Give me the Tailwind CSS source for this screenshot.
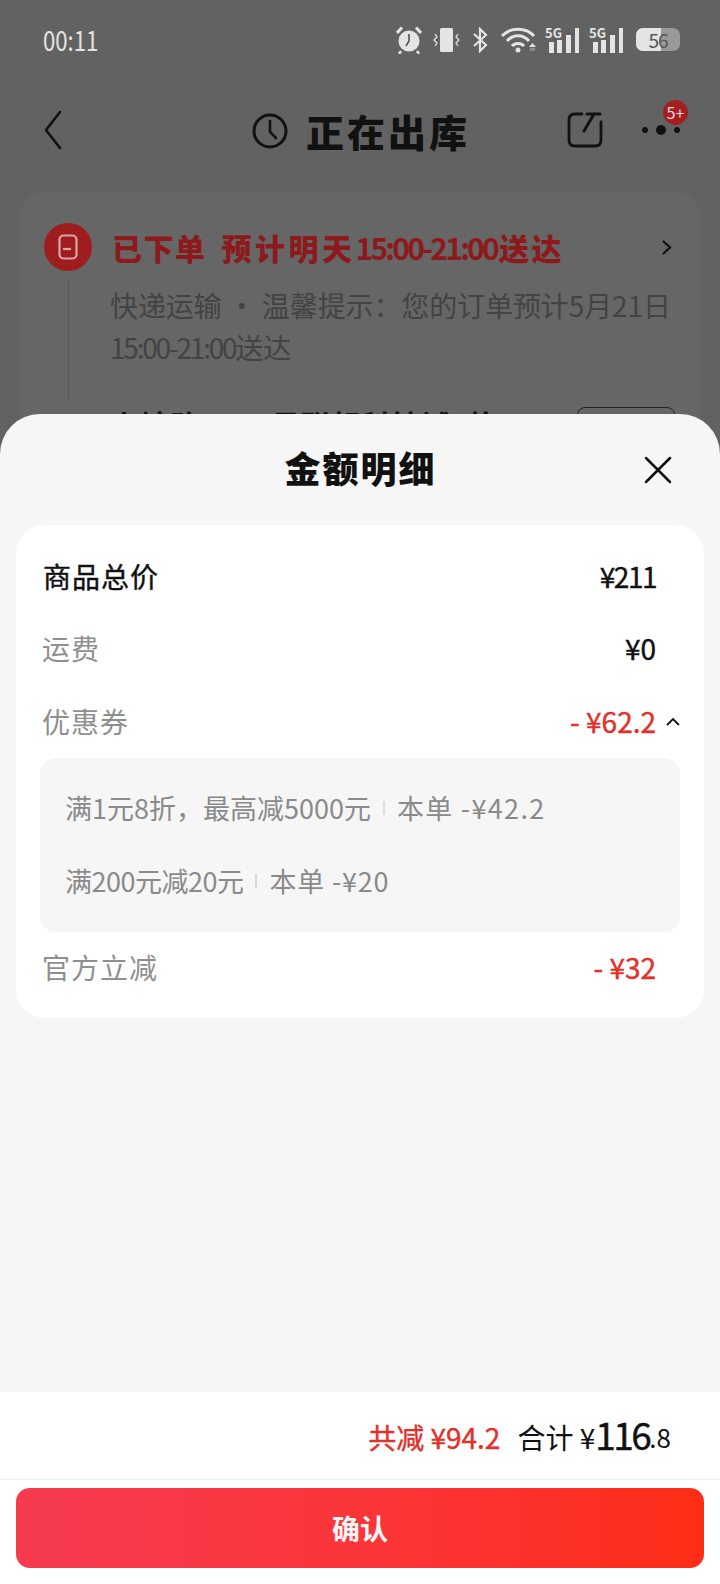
<!DOCTYPE html>
<html lang="zh">
<head>
  <meta charset="utf-8"/>
  <meta name="viewport" content="width=device-width, initial-scale=1.0"/>
  <title>金额明细</title>
  <script src="https://cdn.jsdelivr.net/npm/@tailwindcss/browser@4"></script>
</head>
<body class="bg-[#626262] font-['Noto_Sans_CJK_SC',sans-serif]">
  <div class="relative w-[720px] h-[1584px] overflow-hidden">

    <!-- Status bar -->
    <div class="h-[80px] pl-[43px] pr-[40px] flex items-center justify-between text-[#e4e4e4]">
      <span class="text-[27px] leading-none origin-left scale-x-[0.82] mt-[-2px]">00:11</span>
      <div class="flex items-center h-[28px] mt-[-1px]">
        <svg width="26" height="28" viewBox="0 0 26 28" class="mr-[10px]">
          <circle cx="13" cy="15" r="10.500" fill="#e4e4e4"/>
          <path d="M1 7 L6 1.500 M25 7 L20 1.500" stroke="#e4e4e4" stroke-width="3"/>
          <path d="M5 25 L3 28 M21 25 L23 28" stroke="#e4e4e4" stroke-width="2.500"/>
          <path d="M13 8 V15 L10 20" stroke="#555" stroke-width="1.600" fill="none"/>
        </svg>
        <svg width="30" height="26" viewBox="0 0 30 26" class="mr-[10px]">
          <rect x="8" y="1" width="13" height="24" rx="1.500" fill="#e4e4e4"/>
          <path d="M3 7 L5 10 L2 13 L5 16 L3 19 M26 7 L24 10 L27 13 L24 16 L26 19" stroke="#e4e4e4" stroke-width="1.300" fill="none"/>
        </svg>
        <svg width="16" height="26" viewBox="0 0 16 26" class="mr-[13px]">
          <path d="M2 7 L14 18 L8 24 V2 L14 8 L2 19" stroke="#e4e4e4" stroke-width="2.200" fill="none"/>
        </svg>
        <svg width="36" height="26" viewBox="0 0 36 26" class="mr-[8px]">
          <path d="M1 9 C9 0 25 0 33 9 M6 14 C12 7 22 7 28 14 M11 19 C14 15.500 20 15.500 23 19" stroke="#e4e4e4" stroke-width="3" fill="none"/>
          <circle cx="17" cy="23" r="2.500" fill="#e4e4e4"/>
          <path d="M28 20 L31.500 16 L35 20 Z" fill="#e4e4e4"/>
          <rect x="29" y="21" width="5" height="3" fill="#8a8a8a"/>
        </svg>
        <div class="relative w-[36px] h-[26px] mr-[8px]">
          <span class="absolute left-0 top-[-1px] text-[13px] leading-[14px] font-bold">5G</span>
          <svg width="36" height="26" viewBox="0 0 36 26" class="absolute left-0 top-0">
            <rect x="4" y="15" width="5" height="11" fill="#e4e4e4"/>
            <rect x="12" y="13" width="5" height="13" fill="#e4e4e4"/>
            <rect x="21" y="8" width="5" height="18" fill="#e4e4e4"/>
            <rect x="30" y="1" width="4" height="25" fill="#e4e4e4"/>
          </svg>
        </div>
        <div class="relative w-[36px] h-[26px] mr-[11px]">
          <span class="absolute left-0 top-[-1px] text-[13px] leading-[14px] font-bold">5G</span>
          <svg width="36" height="26" viewBox="0 0 36 26" class="absolute left-0 top-0">
            <rect x="4" y="15" width="5" height="11" fill="#e4e4e4"/>
            <rect x="12" y="13" width="5" height="13" fill="#e4e4e4"/>
            <rect x="21" y="8" width="5" height="18" fill="#e4e4e4"/>
            <rect x="30" y="1" width="4" height="25" fill="#e4e4e4"/>
          </svg>
        </div>
        <div class="relative w-[44px] h-[23px] rounded-[7px] bg-[#999]">
          <div class="w-[25px] h-full rounded-l-[7px] bg-[#e4e4e4]"></div>
          <span class="absolute inset-0 flex items-center justify-center text-[19px] leading-none tracking-[-1px] text-[#555]">56</span>
        </div>
      </div>
    </div>

    <!-- Order page under the sheet -->
    <div class="relative h-[100px] pl-[44px] pr-[40px] flex items-center justify-between">
      <svg width="18" height="40" viewBox="0 0 18 40">
        <path d="M16 2 L2 20 L16 38" stroke="#111" stroke-width="2.600" fill="none" stroke-linecap="round" stroke-linejoin="round"/>
      </svg>
      <div class="flex items-center absolute left-[252px] top-[26px] h-[50px]">
        <svg width="36" height="36" viewBox="0 0 36 36" class="mr-[18px]">
          <circle cx="18" cy="18" r="16" stroke="#111" stroke-width="3" fill="none"/>
          <path d="M18 8 V19 L24 25" stroke="#111" stroke-width="2.600" fill="none" stroke-linecap="round"/>
        </svg>
        <span class="text-[38px] leading-none font-black tracking-[3px] text-[#111]">正在出库</span>
      </div>
      <div class="flex items-center">
        <svg width="36" height="36" viewBox="0 0 36 36" class="mr-[39px]">
          <path d="M15 2 H8 Q2 2 2 8 V28 Q2 34 8 34 H28 Q34 34 34 28 V10" stroke="#111" stroke-width="2.800" fill="none" stroke-linecap="round"/>
          <path d="M20 2 H33 L27 2 L17 19" stroke="#111" stroke-width="3" fill="none" stroke-linecap="round" stroke-linejoin="round"/>
        </svg>
        <svg width="38" height="12" viewBox="0 0 38 12">
          <circle cx="3" cy="6" r="3" fill="#111"/>
          <circle cx="19" cy="6" r="5" fill="#111"/>
          <circle cx="35" cy="6" r="3" fill="#111"/>
        </svg>
      </div>
      <span class="absolute left-[663px] top-[20px] w-[25px] h-[25px] rounded-full bg-[#a31f22] text-[#f0d8d8] text-[16px] leading-[25px] text-center">5+</span>
    </div>

    <div class="mt-[12px] mx-[20px] rounded-[24px] bg-[#666666] pt-[31px] pl-[24px] pr-[25px] h-[400px]">
      <div class="flex items-center">
        <div class="w-[48px] h-[48px] rounded-full bg-[#a01d1f] flex items-center justify-center mr-[20px] shrink-0">
          <svg width="20" height="26" viewBox="0 0 20 26">
            <rect x="1.500" y="1.500" width="17" height="23" rx="4" stroke="#d8a8a8" stroke-width="2.200" fill="none"/>
            <path d="M5 15 H13" stroke="#d8a8a8" stroke-width="2.200"/>
          </svg>
        </div>
        <div class="flex items-center text-[30px] leading-none font-black text-[#8c1a1c] whitespace-nowrap">
          <span class="tracking-[1.500px] mr-[15px]">已下单</span>
          <span class="tracking-[3.500px]">预计明天</span>
          <span class="font-bold tracking-[-2.800px]">15:00-21:00</span>
          <span class="tracking-[2.500px] ml-[2px]">送达</span>
        </div>
        <svg width="11" height="17" viewBox="0 0 11 17" class="ml-auto mr-[3px]">
          <path d="M2 2 L9 8.500 L2 15" stroke="#111" stroke-width="2.200" fill="none"/>
        </svg>
      </div>
      <div class="flex">
        <div class="w-[1px] h-[120px] bg-[#585858] ml-[24px] mt-[8px] mr-[41px] shrink-0"></div>
        <div class="flex-1">
          <p class="mt-[13px] text-[28px] leading-[42px] tracking-[-0.100px] text-[#434343] whitespace-nowrap">快递运输 · 温馨提示：您的订单预计5月21日<br/><span class="tracking-[-2.200px]">15:00-21:00</span>送达</p>
          <div class="flex items-start justify-between mt-[36px]">
            <span class="text-[30px] leading-[40px] font-bold text-[#111] whitespace-nowrap">上塘路1000号联想科技城1栋</span>
            <span class="mt-[3px] w-[98px] h-[50px] rounded-[8px] border border-[#222]"></span>
          </div>
        </div>
      </div>
    </div>

    <!-- Bottom sheet -->
    <div class="absolute left-0 right-0 top-[414px] bottom-0 bg-[#f6f6f6] rounded-t-[40px] flex flex-col">
      <div class="relative h-[111px] flex items-center justify-center">
        <span class="text-[36px] leading-none font-black tracking-[2px] text-[#111] mt-[-5px] ml-[1px]">金额明细</span>
        <svg width="28" height="28" viewBox="0 0 28 28" class="absolute left-[644px] top-[42px]">
          <path d="M2 2 L26 26 M26 2 L2 26" stroke="#111" stroke-width="2.500" stroke-linecap="round"/>
        </svg>
      </div>

      <div class="mx-[16px] h-[493px] bg-white rounded-[28px] pt-[33px] px-[24px] text-[28px] leading-[36px]">
        <div class="flex justify-between pl-[3px] pr-[24px] text-[#111]">
          <span class="tracking-[1px] [-webkit-text-stroke:0.4px_#111]">商品总价</span>
          <span class="tracking-[-1.500px] [-webkit-text-stroke:0.4px_#111]">¥211</span>
        </div>
        <div class="flex justify-between mt-[36px] pl-[2px] pr-[24px]">
          <span class="tracking-[1px] text-[#8f8f8f]">运费</span>
          <span class="text-[#111] [-webkit-text-stroke:0.4px_#111]">¥0</span>
        </div>
        <div class="flex items-center mt-[37px] pl-[2px]">
          <span class="tracking-[1px] text-[#8f8f8f]">优惠券</span>
          <span class="ml-auto text-[#e3302a] [-webkit-text-stroke:0.4px_#e3302a]">- ¥62.2</span>
          <svg width="14" height="9" viewBox="0 0 14 9" class="ml-[10px]">
            <path d="M1 8 L7 2 L13 8" stroke="#111" stroke-width="1.800" fill="none"/>
          </svg>
        </div>
        <div class="mt-[19px] h-[174px] rounded-[16px] bg-[#f6f6f6] pt-[32px] pl-[25px] text-[27px] leading-[36px] text-[#8a8a8a]">
          <div class="flex items-center">
            <span>满1元8折，最高减5000元</span>
            <span class="w-[2px] h-[14px] bg-[#d8d8d8] mx-[12px]"></span>
            <span class="tracking-[1.300px]">本单 -¥42.2</span>
          </div>
          <div class="flex items-center mt-[37px]">
            <span class="tracking-[-0.500px]">满200元减20元</span>
            <span class="w-[2px] h-[14px] bg-[#d8d8d8] mx-[12px]"></span>
            <span class="tracking-[0.800px]">本单 -¥20</span>
          </div>
        </div>
        <div class="flex justify-between mt-[17px] pl-[2px] pr-[24px]">
          <span class="tracking-[1px] text-[#8f8f8f]">官方立减</span>
          <span class="text-[#e3302a] [-webkit-text-stroke:0.4px_#e3302a]">- ¥32</span>
        </div>
      </div>

      <!-- Totals and confirm button -->
      <div class="mt-auto bg-white h-[192px] flex flex-col">
        <div class="h-[88px] border-b border-[#f0f0f0] flex items-center justify-end pr-[49px] pt-[2px]">
          <span class="text-[28px] leading-none text-[#e3302a] mr-[17px] [-webkit-text-stroke:0.4px_#e3302a]">共减 ¥94.2</span>
          <span class="text-[28px] leading-none text-[#111]">合计 ¥</span>
          <span class="text-[37px] leading-none tracking-[-2.500px] text-[#111] mt-[-5px] [-webkit-text-stroke:0.4px_#111]">116</span>
          <span class="text-[26px] leading-none text-[#111]">.8</span>
        </div>
        <div class="mx-[16px] mt-[8px] h-[80px] rounded-[14px] bg-gradient-to-r from-[#f63b50] to-[#ff2d14] flex items-center justify-center">
          <span class="text-[28px] leading-none font-bold text-[#f6f6f6]">确认</span>
        </div>
      </div>
    </div>
  </div>
</body>
</html>
